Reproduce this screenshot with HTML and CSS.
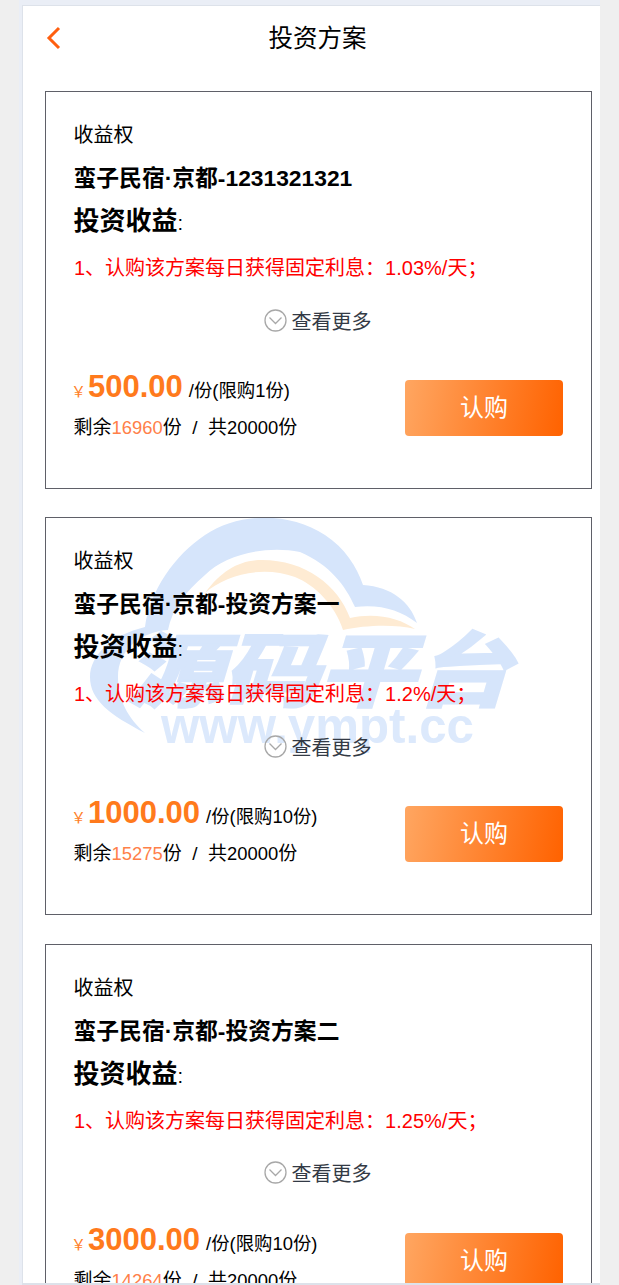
FILE: index.html
```html
<!DOCTYPE html>
<html lang="en">
<head>
  <meta charset="UTF-8">
  <meta name="viewport" content="width=device-width, initial-scale=1.0">
  <link rel="stylesheet" href="styles.css">
</head>
<body>
  <div class="frame">
    <div class="page">
      <!-- Header -->
      <header class="top">
        <svg class="back" width="16" height="24" viewBox="0 0 16 24"><path d="M13 2 L3 12 L13 22" fill="none" stroke="#ff5f0f" stroke-width="3"/></svg>
        <h1>投资方案</h1>
      </header>

      <!-- Watermark -->
      <svg class="mark" width="440" height="250" viewBox="85 510 440 250">
        <path class="mark-blue" d="M145 733 C110 715 90 700 90 677 C90 655 112 635 145 627 C150 590 175 555 205 535 C240 512 290 512 325 535 C345 548 357 567 363 585 C392 587 410 602 417 623 C400 610 380 604 355 607 C345 585 330 565 300 552 C265 545 225 555 205 575 C185 592 172 610 168 630 C140 632 118 650 118 677 C118 700 128 718 145 733 Z"/>
        <path class="mark-orange" d="M205 593 C222 570 240 560 262 560 C305 560 338 585 350 618 C375 612 400 618 415 629 C395 624 365 625 343 630 C335 605 315 585 295 577 C262 565 225 575 205 593 Z"/>
        <text class="mark-cn" x="127" y="700" textLength="384" lengthAdjust="spacingAndGlyphs">源码平台</text>
        <text class="mark-en" x="161" y="743" textLength="313" lengthAdjust="spacingAndGlyphs">www.ympt.cc</text>
      </svg>

      <!-- Plan 1 -->
      <section class="card">
        <p class="kind">收益权</p>
        <h2>蛮子民宿·京都-1231321321</h2>
        <h3><b>投资收益</b>:</h3>
        <p class="rate">1、认购该方案每日获得固定利息：1.03%/天；</p>
        <div class="more">
          <svg width="23" height="23" viewBox="0 0 23 23"><circle cx="11.5" cy="11.5" r="10.5" fill="none" stroke="#a8a8a8" stroke-width="1.3"/><path d="M5.5 8.5 L11.5 14.5 L17.5 8.5" fill="none" stroke="#a8a8a8" stroke-width="1.3"/></svg>
          <span>查看更多</span>
        </div>
        <div class="foot">
          <div>
            <p class="price"><i>￥</i><strong>500.00</strong><span>/份(限购1份)</span></p>
            <p class="left">剩余<em>16960</em>份 &nbsp;/&nbsp; 共<span>20000</span>份</p>
          </div>
          <button type="button">认购</button>
        </div>
      </section>

      <!-- Plan 2 -->
      <section class="card">
        <p class="kind">收益权</p>
        <h2>蛮子民宿·京都-投资方案一</h2>
        <h3><b>投资收益</b>:</h3>
        <p class="rate">1、认购该方案每日获得固定利息：1.2%/天；</p>
        <div class="more">
          <svg width="23" height="23" viewBox="0 0 23 23"><circle cx="11.5" cy="11.5" r="10.5" fill="none" stroke="#a8a8a8" stroke-width="1.3"/><path d="M5.5 8.5 L11.5 14.5 L17.5 8.5" fill="none" stroke="#a8a8a8" stroke-width="1.3"/></svg>
          <span>查看更多</span>
        </div>
        <div class="foot">
          <div>
            <p class="price"><i>￥</i><strong>1000.00</strong><span>/份(限购10份)</span></p>
            <p class="left">剩余<em>15275</em>份 &nbsp;/&nbsp; 共<span>20000</span>份</p>
          </div>
          <button type="button">认购</button>
        </div>
      </section>

      <!-- Plan 3 -->
      <section class="card">
        <p class="kind">收益权</p>
        <h2>蛮子民宿·京都-投资方案二</h2>
        <h3><b>投资收益</b>:</h3>
        <p class="rate">1、认购该方案每日获得固定利息：1.25%/天；</p>
        <div class="more">
          <svg width="23" height="23" viewBox="0 0 23 23"><circle cx="11.5" cy="11.5" r="10.5" fill="none" stroke="#a8a8a8" stroke-width="1.3"/><path d="M5.5 8.5 L11.5 14.5 L17.5 8.5" fill="none" stroke="#a8a8a8" stroke-width="1.3"/></svg>
          <span>查看更多</span>
        </div>
        <div class="foot">
          <div>
            <p class="price"><i>￥</i><strong>3000.00</strong><span>/份(限购10份)</span></p>
            <p class="left">剩余<em>14264</em>份 &nbsp;/&nbsp; 共<span>20000</span>份</p>
          </div>
          <button type="button">认购</button>
        </div>
      </section>
    </div>
  </div>
</body>
</html>
```

FILE: styles.css
```css
/* General Styles */
html, body {
  height: 100%;
  overflow: hidden;
}

body {
  margin: 0;
  padding: 0 19px;
  box-sizing: border-box;
  background-color: #EFEFEF;
  color: #000000;
  font-family: 'Liberation Sans', 'Noto Sans CJK SC', sans-serif;
}

p, h1, h2, h3 {
  margin: 0;
  font-weight: normal;
}

/* Page */
.frame {
  height: 1285px;
  padding: 5px 0 0 3px;
  box-sizing: border-box;
  background-color: #EAEEF6;
}

.page {
  position: relative;
  height: 1280px;
  overflow: hidden;
  background-color: #FFFFFF;
  border-top: 1px solid #DDE2EA;
  border-left: 1px solid #DDE2EA;
  border-bottom: 2px solid #DDE2EA;
  padding: 0 8px 0 22px;
  box-sizing: border-box;
}

/* Header */
.top {
  display: flex;
  align-items: center;
  justify-content: center;
  position: relative;
  height: 60px;
  margin-bottom: 25px;
}

.top h1 {
  font-size: 24.5px;
  margin-right: 2px;
}

.back {
  position: absolute;
  left: 1px;
  top: 20px;
}

/* Watermark */
.mark {
  position: absolute;
  left: 62px;
  top: 504px;
}

.mark-blue {
  fill: #D6E5FB;
}

.mark-orange {
  fill: #FEEBD3;
}

.mark-cn {
  font-size: 80px;
  font-weight: bold;
  font-style: italic;
  fill: #D6E5FB;
  stroke: #D6E5FB;
  stroke-width: 3px;
}

.mark-en {
  font-size: 50px;
  font-weight: bold;
  fill: #DCE9FC;
}

/* Plan card */
.card {
  position: relative;
  height: 398px;
  margin-bottom: 28.4px;
  padding: 28px 28px 0 28px;
  border: 1px solid #5F6068;
  box-sizing: border-box;
}

.kind {
  margin-left: -0.5px;
  font-size: 20px;
  line-height: 30px;
}

.card h2 {
  margin: 13px 0 0 -0.5px;
  font-size: 22.8px;
  line-height: 30px;
  font-weight: bold;
}

.card h3 {
  margin: 12px 0 0 -0.5px;
  font-size: 20px;
  line-height: 32px;
}

.card h3 b {
  font-size: 26px;
}

.rate {
  margin-top: 14px;
  font-size: 20px;
  line-height: 30px;
  color: #FF0000;
}

.more {
  display: flex;
  align-items: center;
  justify-content: center;
  gap: 5px;
  margin-top: 22px;
  padding-right: 2px;
  height: 30px;
  font-size: 20px;
  color: #333A45;
}

/* Price row */
.foot {
  display: flex;
  justify-content: space-between;
  align-items: flex-start;
  margin-top: 32px;
}

.price {
  font-size: 18.4px;
  line-height: 40px;
  white-space: nowrap;
}

.price i {
  margin: 0 2px 0 -3px;
  font-style: normal;
  font-size: 15px;
  color: #FF7F2A;
}

.price strong {
  margin-right: 6px;
  font-size: 31px;
  color: #FF7A1C;
}

.left {
  margin: 2px 0 0 -0.5px;
  font-size: 19px;
  line-height: 28px;
  white-space: nowrap;
}

.left em, .left span {
  font-size: 18.4px;
}

.left em {
  font-style: normal;
  color: #FF8049;
}

button {
  width: 158px;
  height: 56px;
  margin-top: 13px;
  padding: 0 0 5px;
  border: none;
  border-radius: 4px;
  background: linear-gradient(100deg, #FFA661, #FF6200);
  color: #FFFFFF;
  font-family: inherit;
  font-size: 24px;
}
```
